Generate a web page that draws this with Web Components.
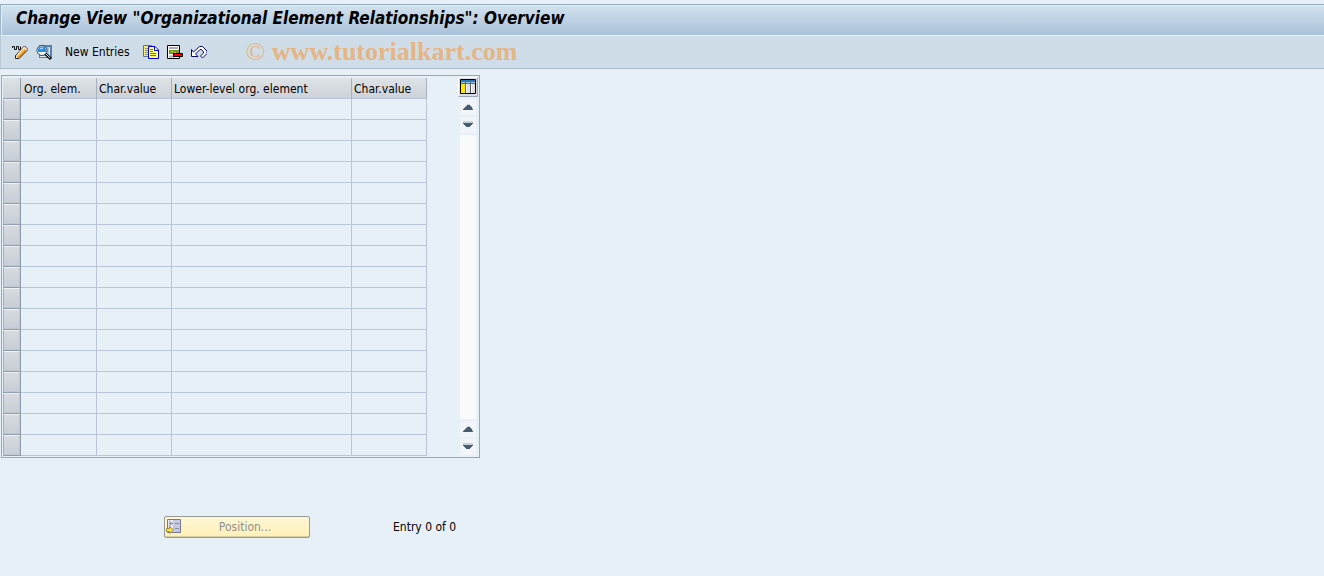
<!DOCTYPE html>
<html lang="en">
<head>
<meta charset="utf-8">
<title>Change View "Organizational Element Relationships": Overview</title>
<style>
  body {
    margin: 0;
    min-height: 100vh;
    background: #e8f0f7;
    color: #000;
    font: 12px/16px "DejaVu Sans Condensed", "DejaVu Sans", sans-serif;
  }
</style>
</head>
<body>
<sap-screen></sap-screen>
<script>
class ScreenTitle extends HTMLElement {
  connectedCallback() {
    this.attachShadow({ mode: 'open' });
    this.shadowRoot.innerHTML = `
      <style>
        :host {
          display: block;
          border-top: 1px solid #8fa9c2;
          border-left: 1px solid #9db4ca;
          border-bottom: 1px solid #e9f1f8;
          background: linear-gradient(#d3e2ee, #a9c2da);
          box-shadow: inset 1px 1px #e6eff6;
        }
        h1 {
          margin: 0;
          padding: 2px 15px 5px;
          font: italic bold 17px/23px "DejaVu Sans Condensed", "DejaVu Sans", sans-serif;
        }
      </style>
      <h1><slot></slot></h1>
    `;
  }
}
customElements.define('screen-title', ScreenTitle);

const icons = {
  change: `
    <path d="M.5 4V2.500H2.500V5.500H4.500V2.500H6.500V5.500H8.500V2.500" fill="none" stroke="#111"/>
    <path d="M3.500 14.500V11.500L12.500 2L16 5.500L7 14.500Z" fill="#f8a23a" stroke="#222"/>
    <path d="M5 11.500L12.500 3.500" stroke="#fff0b8" stroke-width="1.500"/>
    <path d="M7 13.500L15 5.500" stroke="#e06c08"/>
    <path d="M4 12l2 2H4z" fill="#fff"/><path d="M12 3l3 3" stroke="#f0e8f0" stroke-width="1.500"/>`,
  find: `
    <path d="M3 1h13v13H3z" fill="#5583ad"/><path d="M4 3h10v9H4z" fill="#a8bfd3"/>
    <path d="M13.500 3v7M4 12.500h8" stroke="#e4edf5"/>
    <circle cx="6" cy="6.500" r="5" fill="#fff" stroke="#24435f"/>
    <path d="M2 6.500A4 4 0 0 1 10 6.500V8H2z" fill="#1f8fe6"/><path d="M4 4.500h3" stroke="#9bd8ff" stroke-width="1.500"/>
    <path d="M9.500 10L15 15" stroke="#111" stroke-width="3"/><path d="M10 10L14 14" stroke="#ddd"/>`,
  copy: `
    <path d="M.5 1.500H8.500V12.500H.5z" fill="#f4ec78" stroke="#5a7098"/>
    <path d="M2 4.500h4M2 6.500h3M2 8.500h3M2 10.500h3" stroke="#8a8f70"/>
    <path d="M5.500 2.500H12L15.500 6V14.500H5.500z" fill="#ffff68" stroke="#0000dd"/>
    <path d="M11.500 3v3.500H15" fill="#fff" stroke="#0000dd"/>
    <path d="M7 5.500h3M7 7.500h3M7 9.500h6M7 11.500h6" stroke="#77773c"/>`,
  remove: `
    <path d="M.5 1.500h12v13H.5z" fill="#fff" stroke="#000"/>
    <path d="M2 4h9M2 12.500h6" stroke="#aaaabf" stroke-width="2"/>
    <path d="M2 6h10v4H2z" fill="#7c9a10"/><path d="M4 7h2v1H4zM7 8h2v1H7z" fill="#c3d63a"/>
    <path d="M6.500 9.500H15.500V12.500H6.500z" fill="#f00" stroke="#000"/>`,
  undo: `
    <path d="M.5 5.500V12.500H7L4.500 10L9 5.500H10.500L12.500 8V9L9.500 12L11.500 14L16 9.500V7L11.500 2.500H8.500L2.500 8Z" fill="#fff" stroke="#080878"/>`,
  columns: `
    <path d="M.5.5h15v14H.5z" fill="#fff" stroke="#000"/>
    <path d="M1 1h14v4H1z" fill="#2779b6"/><path d="M1 3.500h14" stroke="#9fcbe9"/>
    <path d="M1 5h4v9H1z" fill="#ffe900"/><path d="M7 5h3v9H7zM12 5h3v9h-3z" fill="#dedee3"/>
    <path d="M5.500 3v11M10.500 3v11" stroke="#56606b"/>`,
  position: `
    <path d="M1.500.5h13v13h-13z" fill="#c7c9e2" stroke="#747b91"/>
    <path d="M2 1h5v12H2z" fill="#e7e8ef"/>
    <path d="M3 4.500h4M9 4.500h4M9 9.500h4M3 2l3 2.500L3 7" fill="none" stroke="#858ba4"/>
    <path d="M.5 9.500h3v-2l4 3.500-4 3.500v-2h-3z" fill="#ffe53b" stroke="#9b8a4e"/>`,
  up: `<path d="M7 2h2l4 4v2H3V6z" fill="#c8d0d7"/><path d="M7 3h2l3 3v1h1v1H3V7h1V6z" fill="#465d70"/>`,
  down: `<path d="M3 1h10v2H3z" fill="#c8d0d7"/><path d="M3 3h10v1L9 7H7L3 4z" fill="#465d70"/>`
};

class SapIcon extends HTMLElement {
  connectedCallback() {
    const arrow = ['up', 'down'].includes(this.getAttribute('name'));
    const height = arrow ? 10 : 16;
    this.attachShadow({ mode: 'open' });
    this.shadowRoot.innerHTML = `
      <style>
        :host { display: block; flex: none; }
        svg { display: block; }
      </style>
      <svg width="16" height="${height}" viewBox="0 0 16 ${height}" shape-rendering="${arrow ? 'crispEdges' : 'auto'}" aria-hidden="true">${icons[this.getAttribute('name')]}</svg>
    `;
  }
}
customElements.define('sap-icon', SapIcon);

class AppToolbar extends HTMLElement {
  connectedCallback() {
    this.attachShadow({ mode: 'open' });
    this.shadowRoot.innerHTML = `
      <style>
        :host {
          display: flex;
          align-items: center;
          height: 32px;
          padding-left: 11px;
          border-left: 1px solid #b8c9d8;
          border-bottom: 1px solid #a8b9cd;
          background: #cfdde8;
        }
        .tools { display: flex; align-items: center; gap: 8px; }
        button {
          display: block;
          padding: 0;
          border: 0;
          background: none;
          color: inherit;
          font: inherit;
        }
        .text { margin: 0 5px; }
        .mark {
          margin-left: 39px;
          color: #e5b584;
          font: bold 26px/30px "Liberation Serif", serif;
        }
        .mark span { font-weight: normal; }
      </style>
      <div class="tools">
        <button aria-label="Display / Change"><sap-icon name="change"></sap-icon></button>
        <button aria-label="Details"><sap-icon name="find"></sap-icon></button>
        <button class="text">New Entries</button>
        <button aria-label="Copy As"><sap-icon name="copy"></sap-icon></button>
        <button aria-label="Delete"><sap-icon name="remove"></sap-icon></button>
        <button aria-label="Undo Change"><sap-icon name="undo"></sap-icon></button>
      </div>
      <div class="mark"><span>©</span> www.tutorialkart.com</div>
    `;
  }
}
customElements.define('app-toolbar', AppToolbar);

class TableScroller extends HTMLElement {
  connectedCallback() {
    this.attachShadow({ mode: 'open' });
    this.shadowRoot.innerHTML = `
      <style>
        :host { display: flex; flex-direction: column; align-items: center; gap: 2px; }
        button { display: block; padding: 0; border: 0; }
        .config {
          padding: 1px;
          border: 1px solid;
          border-color: #fff #9ca6b1 #9ca6b1 #fff;
          background: #d8dde2;
        }
        .arrow { padding: 3px 0; background: #f1f5f9; }
        .track { flex: 1; width: 16px; background: #f9fafc; }
      </style>
      <button class="config" aria-label="Configuration"><sap-icon name="columns"></sap-icon></button>
      <button class="arrow" aria-label="Scroll up"><sap-icon name="up"></sap-icon></button>
      <button class="arrow" aria-label="Scroll down"><sap-icon name="down"></sap-icon></button>
      <div class="track"></div>
      <button class="arrow" aria-label="Previous page"><sap-icon name="up"></sap-icon></button>
      <button class="arrow" aria-label="Next page"><sap-icon name="down"></sap-icon></button>
    `;
  }
}
customElements.define('table-scroller', TableScroller);

class TableControl extends HTMLElement {
  connectedCallback() {
    const row = `<tr><td><button aria-label="Select row"></button></td>${'<td></td>'.repeat(4)}</tr>`;
    this.attachShadow({ mode: 'open' });
    this.shadowRoot.innerHTML = `
      <style>
        :host {
          display: flex;
          gap: 31px;
          width: fit-content;
          margin: 6px 0 0 1px;
          padding: 1px;
          border: 1px solid #91aac2;
        }
        table { table-layout: fixed; width: 424px; border-spacing: 0; margin-top: 1px; }
        .select { width: 18px; }
        .first { width: 76px; }
        .short { width: 75px; }
        .long { width: 180px; }
        th, td {
          box-sizing: border-box;
          height: 21px;
          padding: 0;
          border-right: 1px solid #bac5d5;
          border-bottom: 1px solid #bac5d5;
        }
        th {
          padding: 1px 0 0 2px;
          border-right-color: #a5b1bf;
          background: linear-gradient(#dee3e7, #cdd2d9);
          font-weight: normal;
          text-align: left;
          white-space: nowrap;
        }
        th:nth-child(2) { padding-left: 3px; }
        th:first-child, td:first-child {
          border-right-color: #8e9cac;
          border-bottom-color: #929eac;
        }
        button {
          display: block;
          width: 100%;
          height: 20px;
          padding: 0;
          border: 1px solid;
          border-color: #eef1f4 #c0c7cf #c0c7cf #a6b0bb;
          background: linear-gradient(#d7dbe0, #c8ced6);
        }
        table-scroller { margin-bottom: 1px; }
      </style>
      <table>
        <colgroup><col class="select"><col class="first"><col class="short"><col class="long"><col class="short"></colgroup>
        <thead>
          <tr><th></th><th>Org. elem.</th><th>Char.value</th><th>Lower-level org. element</th><th>Char.value</th></tr>
        </thead>
        <tbody>${row.repeat(17)}</tbody>
      </table>
      <table-scroller></table-scroller>
    `;
  }
}
customElements.define('table-control', TableControl);

class PositionBar extends HTMLElement {
  connectedCallback() {
    this.attachShadow({ mode: 'open' });
    this.shadowRoot.innerHTML = `
      <style>
        :host {
          display: flex;
          align-items: center;
          gap: 83px;
          padding: 58px 0 0 164px;
        }
        button {
          display: flex;
          align-items: center;
          width: 146px;
          height: 22px;
          padding: 0 1px;
          border: 1px solid #999a96;
          border-radius: 2px;
          background: linear-gradient(#fff7d5, #fff0b8);
          box-shadow: inset 0 -1px #d8cd9f;
          color: #90908c;
          font: inherit;
        }
        span { flex: 1; text-align: center; }
      </style>
      <button disabled><sap-icon name="position"></sap-icon><span>Position...</span></button>
      <div>Entry 0 of 0</div>
    `;
  }
}
customElements.define('position-bar', PositionBar);

class SapScreen extends HTMLElement {
  connectedCallback() {
    this.attachShadow({ mode: 'open' });
    this.shadowRoot.innerHTML = `
      <style>
        :host { display: block; padding-top: 4px; }
      </style>
      <screen-title>Change View "Organizational Element Relationships": Overview</screen-title>
      <app-toolbar></app-toolbar>
      <table-control></table-control>
      <position-bar></position-bar>
    `;
  }
}
customElements.define('sap-screen', SapScreen);
</script>
</body>
</html>
